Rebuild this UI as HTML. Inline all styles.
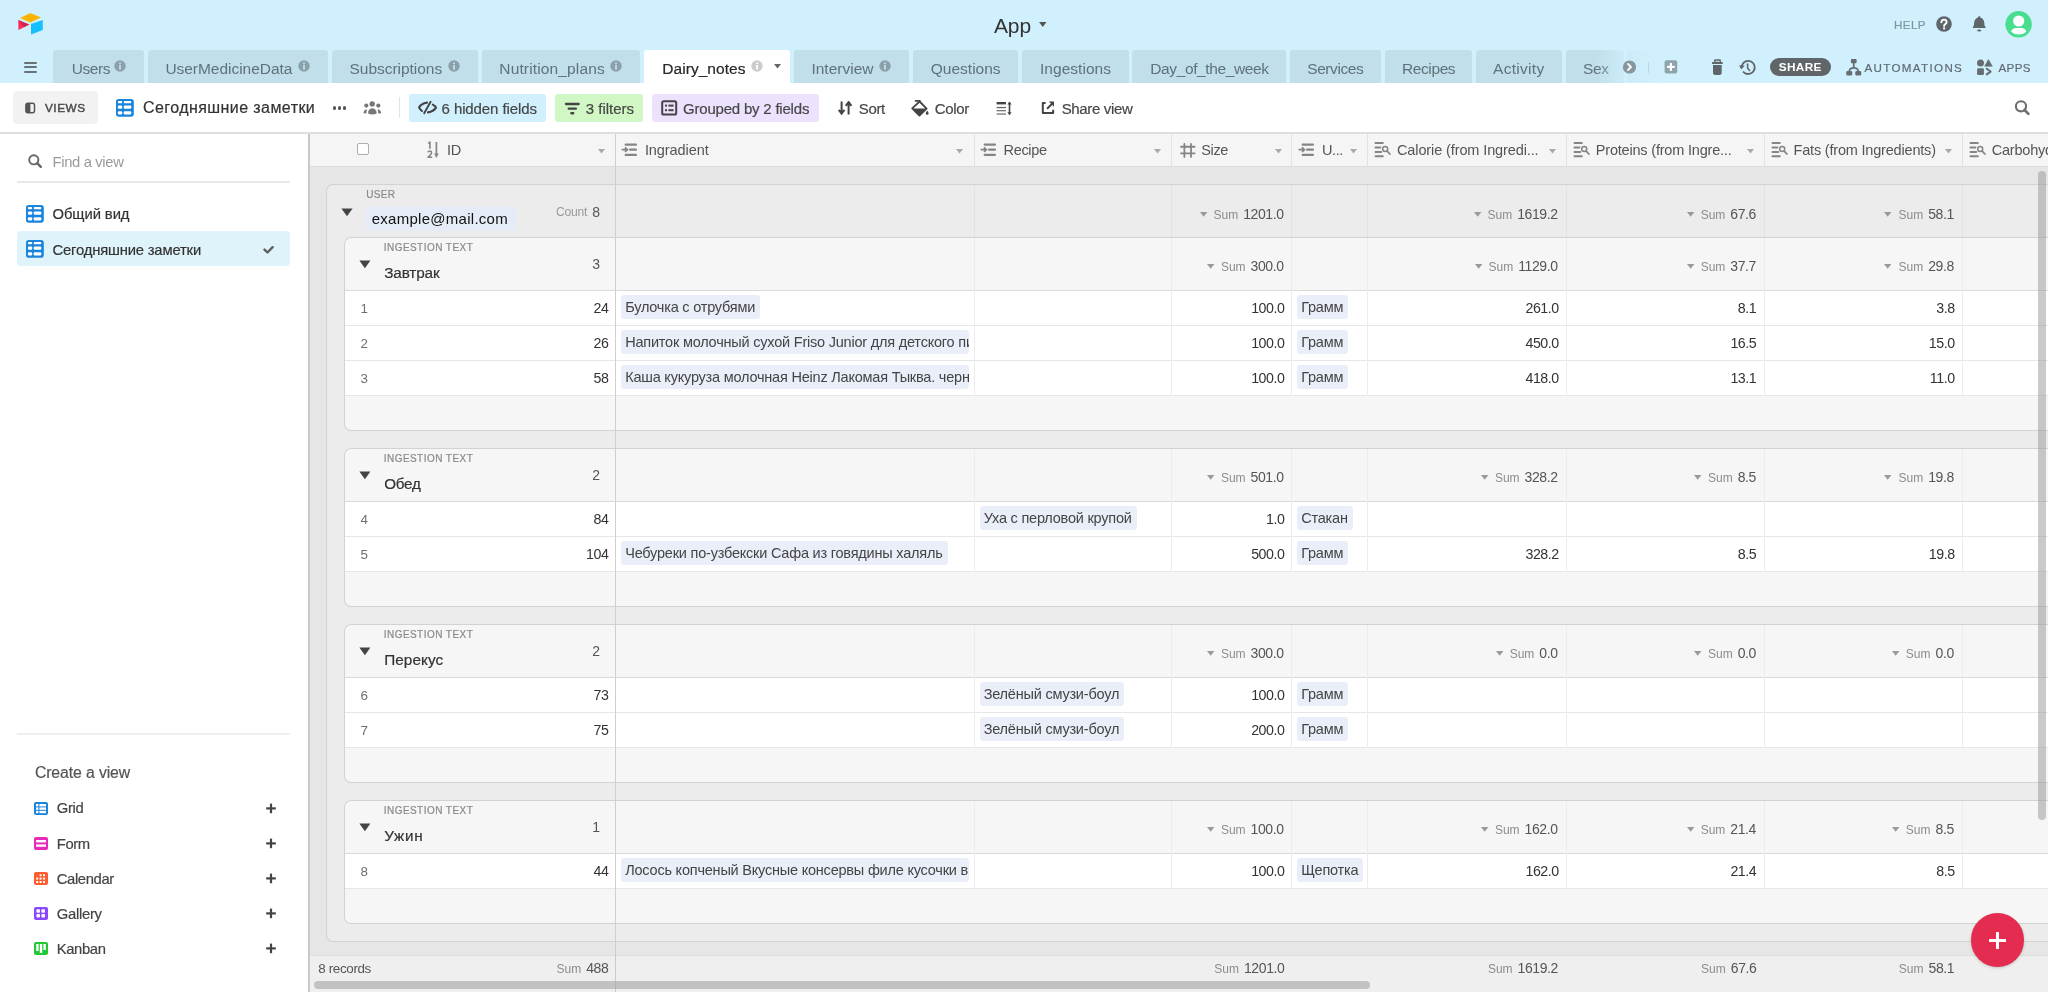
<!DOCTYPE html>
<html><head><meta charset="utf-8"><title>Airtable</title>
<style>
html,body{margin:0;padding:0;}
body{width:2048px;height:992px;overflow:hidden;position:relative;background:#fff;font-family:"Liberation Sans",sans-serif;}
.a{position:absolute;}
.t{position:absolute;white-space:nowrap;line-height:1;}
.med{-webkit-text-stroke:0.2px currentColor;}
.med2{-webkit-text-stroke:0.45px currentColor;}
.agg{line-height:1;}
.pill{height:24px;line-height:24px;padding:0 5px 0 4.2px;background:#e9eef9;border-radius:3px;font-size:14.5px;letter-spacing:-0.21px;color:#444;white-space:nowrap;overflow:hidden;box-sizing:border-box;}
</style></head><body>
<div id="root" style="position:absolute;left:0;top:0;width:2048px;height:992px;overflow:hidden;will-change:transform">
<div class="a" style="left:0px;top:0px;width:2048px;height:83px;background:#d0f0fd;"></div>
<svg class="a" style="left:16px;top:11px;" width="30" height="26" viewBox="0 0 30 26"><polygon points="14.3,2 25,6.6 14.3,11.6 4,7" fill="#fcb400"/><polygon points="2.2,9 13.3,13.5 2.5,19" fill="#f82b60"/><polygon points="2.2,9 13.3,13.5 8,16.2" fill="#ba1e45" opacity="0.6"/><polygon points="15,13 26.8,8.9 26.8,19 15,23.6" fill="#18bfff"/></svg>
<div class="t " style="left:993.90px;top:15.02px;font-size:21px;color:#333;letter-spacing:-0.040px;">App</div>
<svg class="a" style="left:1039px;top:22px;" width="8" height="5" viewBox="0 0 8 5"><polygon points="0,0 7.5,0 3.75,5" fill="#555"/></svg>
<div class="t med" style="left:1894.00px;top:18.98px;font-size:11.6px;color:#7f959e;letter-spacing:0.400px;">HELP</div>
<svg class="a" style="left:1935px;top:15px;" width="18" height="18" viewBox="0 0 18 18"><circle cx="9" cy="9" r="7.8" fill="#5f6569"/><path d="M6.4,7.2 Q6.4,4.6 9,4.6 Q11.6,4.6 11.6,7 Q11.6,8.4 10,9.3 Q9.1,9.9 9.1,11" stroke="#fff" stroke-width="1.9" fill="none" stroke-linecap="round"/><circle cx="9.1" cy="13.4" r="1.1" fill="#fff"/></svg>
<svg class="a" style="left:1971px;top:15px;" width="17" height="18" viewBox="0 0 17 18"><path d="M8.2,1 Q9.2,1.2 9.4,2.4 Q12.9,3.4 13.3,8 L13.5,10.4 Q14.6,11.4 14.7,13 L1.7,13 Q1.8,11.4 2.9,10.4 L3.1,8 Q3.5,3.4 7,2.4 Q7.2,1.2 8.2,1 Z" fill="#5f6569"/><ellipse cx="8.2" cy="15.6" rx="2.1" ry="1" fill="#5f6569"/></svg>
<svg class="a" style="left:2005px;top:11px;" width="28" height="28" viewBox="0 0 28 28"><circle cx="13.6" cy="13.3" r="13.2" fill="#48dd8f"/><circle cx="13.7" cy="10" r="5.6" fill="#fff"/><path d="M6,20.8 Q7,17 11,17 L16.4,17 Q20.4,17 21.4,20.8 Q18.5,23.5 13.7,23.5 Q9,23.5 6,20.8 Z" fill="#fff"/></svg>
<div class="a" style="left:24px;top:61.8px;width:13px;height:2.2px;background:#687277;border-radius:1.1px;"></div>
<div class="a" style="left:24px;top:66.2px;width:13px;height:2.2px;background:#687277;border-radius:1.1px;"></div>
<div class="a" style="left:24px;top:70.5px;width:13px;height:2.2px;background:#687277;border-radius:1.1px;"></div>
<div class="a" style="left:53px;top:50px;width:91px;height:33px;background:#c0dfeb;border-radius:3px 3px 0 0;"></div>
<div class="t " style="left:71.70px;top:60.68px;font-size:15.5px;color:#5f7279;letter-spacing:-0.400px;">Users</div>
<svg class="a" style="left:113.7px;top:60px;" width="12" height="12" viewBox="0 0 12 12"><circle cx="6" cy="6" r="5.7" fill="#8aa1aa"/><rect x="5.1" y="5" width="1.8" height="4.6" fill="#c0dfeb"/><rect x="5.1" y="2.5" width="1.8" height="1.6" fill="#c0dfeb"/></svg>
<div class="a" style="left:147.6px;top:50px;width:180.4px;height:33px;background:#c0dfeb;border-radius:3px 3px 0 0;"></div>
<div class="t " style="left:165.40px;top:60.68px;font-size:15.5px;color:#5f7279;letter-spacing:-0.035px;">UserMedicineData</div>
<svg class="a" style="left:297.9px;top:60px;" width="12" height="12" viewBox="0 0 12 12"><circle cx="6" cy="6" r="5.7" fill="#8aa1aa"/><rect x="5.1" y="5" width="1.8" height="4.6" fill="#c0dfeb"/><rect x="5.1" y="2.5" width="1.8" height="1.6" fill="#c0dfeb"/></svg>
<div class="a" style="left:331.7px;top:50px;width:146.0px;height:33px;background:#c0dfeb;border-radius:3px 3px 0 0;"></div>
<div class="t " style="left:349.50px;top:60.68px;font-size:15.5px;color:#5f7279;letter-spacing:-0.028px;">Subscriptions</div>
<svg class="a" style="left:447.7px;top:60px;" width="12" height="12" viewBox="0 0 12 12"><circle cx="6" cy="6" r="5.7" fill="#8aa1aa"/><rect x="5.1" y="5" width="1.8" height="4.6" fill="#c0dfeb"/><rect x="5.1" y="2.5" width="1.8" height="1.6" fill="#c0dfeb"/></svg>
<div class="a" style="left:481.5px;top:50px;width:158.79999999999995px;height:33px;background:#c0dfeb;border-radius:3px 3px 0 0;"></div>
<div class="t " style="left:499.30px;top:60.68px;font-size:15.5px;color:#5f7279;letter-spacing:0.144px;">Nutrition_plans</div>
<svg class="a" style="left:610.2px;top:60px;" width="12" height="12" viewBox="0 0 12 12"><circle cx="6" cy="6" r="5.7" fill="#8aa1aa"/><rect x="5.1" y="5" width="1.8" height="4.6" fill="#c0dfeb"/><rect x="5.1" y="2.5" width="1.8" height="1.6" fill="#c0dfeb"/></svg>
<div class="a" style="left:793.6px;top:50px;width:115.60000000000002px;height:33px;background:#c0dfeb;border-radius:3px 3px 0 0;"></div>
<div class="t " style="left:811.40px;top:60.68px;font-size:15.5px;color:#5f7279;letter-spacing:0.015px;">Interview</div>
<svg class="a" style="left:879.2px;top:60px;" width="12" height="12" viewBox="0 0 12 12"><circle cx="6" cy="6" r="5.7" fill="#8aa1aa"/><rect x="5.1" y="5" width="1.8" height="4.6" fill="#c0dfeb"/><rect x="5.1" y="2.5" width="1.8" height="1.6" fill="#c0dfeb"/></svg>
<div class="a" style="left:913px;top:50px;width:105.39999999999998px;height:33px;background:#c0dfeb;border-radius:3px 3px 0 0;"></div>
<div class="t " style="left:930.80px;top:60.68px;font-size:15.5px;color:#5f7279;letter-spacing:0.001px;">Questions</div>
<div class="a" style="left:1022px;top:50px;width:106.79999999999995px;height:33px;background:#c0dfeb;border-radius:3px 3px 0 0;"></div>
<div class="t " style="left:1040.00px;top:60.68px;font-size:15.5px;color:#5f7279;letter-spacing:0.036px;">Ingestions</div>
<div class="a" style="left:1132px;top:50px;width:154px;height:33px;background:#c0dfeb;border-radius:3px 3px 0 0;"></div>
<div class="t " style="left:1150.30px;top:60.68px;font-size:15.5px;color:#5f7279;letter-spacing:-0.387px;">Day_of_the_week</div>
<div class="a" style="left:1290px;top:50px;width:91px;height:33px;background:#c0dfeb;border-radius:3px 3px 0 0;"></div>
<div class="t " style="left:1307.20px;top:60.68px;font-size:15.5px;color:#5f7279;letter-spacing:-0.400px;">Services</div>
<div class="a" style="left:1385px;top:50px;width:87px;height:33px;background:#c0dfeb;border-radius:3px 3px 0 0;"></div>
<div class="t " style="left:1402.00px;top:60.68px;font-size:15.5px;color:#5f7279;letter-spacing:-0.400px;">Recipes</div>
<div class="a" style="left:1476px;top:50px;width:85.59999999999991px;height:33px;background:#c0dfeb;border-radius:3px 3px 0 0;"></div>
<div class="t " style="left:1493.00px;top:60.68px;font-size:15.5px;color:#5f7279;letter-spacing:0.300px;">Activity</div>
<div class="a" style="left:1565.5px;top:50px;width:58.5px;height:33px;background:#c0dfeb;border-radius:3px 3px 0 0;"></div>
<div class="t " style="left:1583.00px;top:60.68px;font-size:15.5px;color:#5f7279;letter-spacing:-0.400px;">Sex</div>
<div class="a" style="left:1627px;top:50px;width:30px;height:33px;background:#c0dfeb;border-radius:3px 3px 0 0;"></div>
<div class="a" style="left:1596px;top:50px;width:64px;height:33px;background:linear-gradient(to right, rgba(208,240,253,0) 0%, rgba(208,240,253,0.75) 45%, #d0f0fd 100%);"></div>
<div class="a" style="left:1648px;top:62px;width:1px;height:11px;background:rgba(95,114,121,0.18);"></div>
<div class="a" style="left:643.8px;top:50px;width:146px;height:34px;background:#fff;border-radius:3px 3px 0 0;"></div>
<div class="t med" style="left:662.30px;top:60.88px;font-size:15.5px;color:#262626;letter-spacing:0.040px;">Dairy_notes</div>
<svg class="a" style="left:750.8px;top:60px;" width="12" height="12" viewBox="0 0 12 12"><circle cx="6" cy="6" r="5.7" fill="#ccc"/><rect x="5.1" y="5" width="1.8" height="4.6" fill="#fff"/><rect x="5.1" y="2.5" width="1.8" height="1.6" fill="#fff"/></svg>
<svg class="a" style="left:773.5px;top:64px;" width="8" height="5" viewBox="0 0 8 5"><polygon points="0,0 7,0 3.5,4.5" fill="#666"/></svg>
<svg class="a" style="left:1622px;top:60px;" width="15" height="15" viewBox="0 0 15 15"><circle cx="7.5" cy="7" r="6.6" fill="#86979e"/><path d="M6,4 L9,7 L6,10" stroke="#fff" stroke-width="1.8" fill="none" stroke-linecap="round" stroke-linejoin="round"/></svg>
<svg class="a" style="left:1664px;top:60px;" width="14" height="14" viewBox="0 0 14 14"><rect x="0.6" y="0.2" width="12.6" height="13.2" rx="2" fill="#8fa3ab"/><rect x="5.8" y="3" width="2.2" height="7.8" fill="#fff"/><rect x="3" y="5.8" width="7.8" height="2.2" fill="#fff"/></svg>
<svg class="a" style="left:1711px;top:58px;" width="13" height="18" viewBox="0 0 13 18"><rect x="3.7" y="2" width="5.6" height="2.4" stroke="#5f6569" stroke-width="1.3" fill="none" rx="0.4"/><rect x="1" y="3.9" width="10.7" height="2" rx="0.5" fill="#5f6569"/><path d="M2,7.1 L10.7,7.1 L10.7,14.4 Q10.7,16.9 8.2,16.9 L4.5,16.9 Q2,16.9 2,14.4 Z" fill="#5f6569"/></svg>
<svg class="a" style="left:1737px;top:58px;" width="20" height="18" viewBox="0 0 20 18"><path d="M6.56,14.06 A6.55,6.55 0 1 0 4.9,7.6" stroke="#5f6569" stroke-width="1.8" fill="none" stroke-linecap="round"/><polygon points="1.9,7.4 7.7,7.6 4.5,11.4" fill="#5f6569"/><path d="M10.6,6 L10.6,10.3 L12.6,12.5" stroke="#5f6569" stroke-width="1.6" fill="none" stroke-linecap="round" stroke-linejoin="round"/></svg>
<div class="a" style="left:1770.4px;top:58.4px;width:60.6px;height:17.6px;background:#5f6569;border-radius:9px;"></div>
<div class="t " style="left:1778.80px;top:62.01px;font-size:11.8px;color:#fff;font-weight:bold;letter-spacing:0.325px;">SHARE</div>
<svg class="a" style="left:1845px;top:58px;" width="18" height="19" viewBox="0 0 18 19"><rect x="5.9" y="1.1" width="5.7" height="4.1" rx="1" fill="#656d71"/><path d="M8.75,5 L8.75,9.8 M4.3,13.6 Q4.3,9.9 8.75,9.9 Q13.2,9.9 13.2,13.6" stroke="#656d71" stroke-width="1.7" fill="none"/><rect x="1.3" y="13" width="5.9" height="4.5" rx="1.2" fill="#656d71"/><rect x="10.3" y="13" width="5.9" height="4.5" rx="1.2" fill="#656d71"/></svg>
<div class="t med" style="left:1864.40px;top:61.98px;font-size:11.6px;color:#626b70;letter-spacing:1.349px;">AUTOMATIONS</div>
<svg class="a" style="left:1976px;top:59px;" width="18" height="17" viewBox="0 0 18 17"><circle cx="4.5" cy="4" r="3.5" fill="#656d71"/><polygon points="12.4,0.6 16.3,7.2 8.7,7.2" fill="#656d71" stroke="#656d71" stroke-width="0.6" stroke-linejoin="round"/><rect x="1.1" y="9.2" width="6.8" height="6.8" rx="1.2" fill="#656d71"/><path d="M10.8,9.8 L14.6,12.6 L10.8,15.4" stroke="#656d71" stroke-width="2" fill="none" stroke-linecap="round" stroke-linejoin="round"/></svg>
<div class="t med" style="left:1998.40px;top:61.98px;font-size:11.6px;color:#626b70;letter-spacing:0.400px;">APPS</div>
<div class="a" style="left:0px;top:83px;width:2048px;height:50px;background:#fff;"></div>
<div class="a" style="left:0px;top:132px;width:2048px;height:2px;background:#dfdfdf;"></div>
<div class="a" style="left:13px;top:91px;width:85px;height:33px;background:#f2f2f2;border-radius:4px;"></div>
<svg class="a" style="left:24px;top:102px;" width="12" height="12" viewBox="0 0 12 12"><rect x="1.9" y="1.2" width="8.6" height="9.6" rx="2" fill="none" stroke="#555" stroke-width="1.5"/><path d="M3.4,1.2 L6.4,1.2 L6.4,10.8 L3.4,10.8 Q1.9,10.8 1.9,9.3 L1.9,2.7 Q1.9,1.2 3.4,1.2 Z" fill="#555"/></svg>
<div class="t med2" style="left:44.90px;top:102.81px;font-size:11.8px;color:#4a4a4a;letter-spacing:0.569px;">VIEWS</div>
<svg class="a" style="left:116px;top:99px;" width="18" height="18" viewBox="0 0 18 18"><rect x="0" y="0" width="17.80" height="17.80" rx="2.80" fill="#1a83dc"/><rect x="1.90" y="2.10" width="4.30" height="2.10" rx="1.00" fill="#fff"/><rect x="7.70" y="2.10" width="7.60" height="2.10" rx="1.00" fill="#fff"/><rect x="1.90" y="6.50" width="4.30" height="3.30" rx="1.00" fill="#fff"/><rect x="7.70" y="6.50" width="7.60" height="3.30" rx="1.00" fill="#fff"/><rect x="1.90" y="12.20" width="4.30" height="3.20" rx="1.00" fill="#fff"/><rect x="7.70" y="12.20" width="7.60" height="3.20" rx="1.00" fill="#fff"/></svg>
<div class="t med" style="left:143.00px;top:100.26px;font-size:16px;color:#333;letter-spacing:0.424px;">Сегодняшние заметки</div>
<div class="a" style="left:332.9px;top:106.4px;width:3.2px;height:3.2px;border-radius:50%;background:#555"></div>
<div class="a" style="left:337.9px;top:106.4px;width:3.2px;height:3.2px;border-radius:50%;background:#555"></div>
<div class="a" style="left:342.9px;top:106.4px;width:3.2px;height:3.2px;border-radius:50%;background:#555"></div>
<svg class="a" style="left:362px;top:100px;" width="21" height="16" viewBox="0 0 21 16"><circle cx="10.2" cy="3.9" r="2.7" fill="#777"/><circle cx="4.3" cy="5.6" r="2.1" fill="#777"/><circle cx="16.3" cy="5.6" r="2.1" fill="#777"/><path d="M6.1,13.6 Q6,8.4 10.3,8.2 Q14.6,8.4 14.6,13.6 Q10.4,15.6 6.1,13.6 Z" fill="#777"/><path d="M1.4,13.2 Q1.6,10.2 3.8,9.4 L5.2,9.6 Q4.3,11.4 4.4,13.4 Z" fill="#777"/><path d="M19.2,13.2 Q19,10.2 16.8,9.4 L15.4,9.6 Q16.3,11.4 16.2,13.4 Z" fill="#777"/></svg>
<div class="a" style="left:399px;top:97px;width:1px;height:21px;background:#e3e3e3;"></div>
<div class="a" style="left:409.4px;top:93.9px;width:136.5px;height:27.7px;background:#d0f0fd;border-radius:3px;"></div>
<svg class="a" style="left:416px;top:99px;" width="22" height="16" viewBox="0 0 22 16"><path d="M11,3.6 Q5,4.6 3,8.4 Q4,10.6 6,12" stroke="#444" stroke-width="2.1" fill="none" stroke-linecap="round"/><path d="M16.8,5.6 Q19.6,7 20,8.6 Q17.5,12.6 12,13.4" stroke="#444" stroke-width="2.1" fill="none" stroke-linecap="round"/><path d="M14.6,2.8 L8.2,14.2" stroke="#444" stroke-width="1.9" stroke-linecap="round"/></svg>
<div class="t med" style="left:441.60px;top:100.90px;font-size:15px;color:#474747;letter-spacing:-0.104px;">6 hidden fields</div>
<div class="a" style="left:555px;top:93.9px;width:88px;height:27.7px;background:#d1f7c4;border-radius:3px;"></div>
<svg class="a" style="left:564px;top:101.2px;" width="17" height="15" viewBox="0 0 17 15"><rect x="0.8" y="1.8" width="15" height="2.4" rx="1.1" fill="#444"/><rect x="3.6" y="6.4" width="9.4" height="2.4" rx="1.1" fill="#444"/><rect x="6.2" y="11" width="4.2" height="2.4" rx="1.1" fill="#444"/></svg>
<div class="t med" style="left:585.80px;top:100.90px;font-size:15px;color:#474747;letter-spacing:-0.005px;">3 filters</div>
<div class="a" style="left:651.9px;top:93.9px;width:167px;height:27.7px;background:#ede2fe;border-radius:3px;"></div>
<svg class="a" style="left:661px;top:100px;" width="17" height="16" viewBox="0 0 17 16"><rect x="1.2" y="1.2" width="14" height="13.4" rx="1.6" fill="none" stroke="#444" stroke-width="2"/><rect x="4" y="4.6" width="2" height="2" fill="#444"/><rect x="7.4" y="4.6" width="5.2" height="2" fill="#444"/><rect x="4" y="9.2" width="2" height="2" fill="#444"/><rect x="7.4" y="9.2" width="5.2" height="2" fill="#444"/></svg>
<div class="t med" style="left:683.00px;top:100.90px;font-size:15px;color:#474747;letter-spacing:-0.205px;">Grouped by 2 fields</div>
<svg class="a" style="left:838px;top:101px;" width="15" height="14" viewBox="0 0 15 14"><path d="M3.6,0.6 L3.6,12 M0.8,8.8 L3.6,12.6 L6.4,8.8" stroke="#444" stroke-width="2" fill="none"/><path d="M10.6,13.4 L10.6,1.6 M7.8,4.8 L10.6,1 L13.4,4.8" stroke="#444" stroke-width="2" fill="none"/></svg>
<div class="t med" style="left:858.70px;top:100.90px;font-size:15px;color:#474747;letter-spacing:-0.308px;">Sort</div>
<svg class="a" style="left:910px;top:99px;" width="20" height="18" viewBox="0 0 20 18"><path d="M2.2,9.4 L9.6,2.5 L16.6,9.6 L9.4,16.6 Z" fill="none" stroke="#444" stroke-width="1.8" stroke-linejoin="round"/><path d="M2.2,9.4 L16.6,9.6 L9.4,16.6 Z" fill="#444"/><path d="M5.6,1.9 L9.8,1.9" stroke="#444" stroke-width="1.8" stroke-linecap="round"/><path d="M17.2,11.6 Q18.6,13.6 18.6,14.4 Q18.6,15.8 17.2,15.8 Q15.8,15.8 15.8,14.4 Q15.8,13.6 17.2,11.6 Z" fill="#444"/></svg>
<div class="t med" style="left:934.70px;top:100.90px;font-size:15px;color:#474747;letter-spacing:-0.350px;">Color</div>
<svg class="a" style="left:995px;top:100px;" width="18" height="17" viewBox="0 0 18 17"><rect x="1.6" y="2" width="9.4" height="2.4" fill="#444"/><rect x="1.6" y="6.9" width="9.4" height="1.3" fill="#666"/><rect x="1.6" y="10" width="9.4" height="1.3" fill="#777"/><rect x="1.6" y="13.4" width="9.4" height="1.3" fill="#777"/><path d="M14.5,2.6 L14.5,13.8" stroke="#444" stroke-width="1.6"/><polygon points="12.4,4.4 14.5,1.4 16.6,4.4" fill="#444"/><polygon points="12.4,12.2 14.5,15.2 16.6,12.2" fill="#444"/></svg>
<svg class="a" style="left:1040px;top:100px;" width="16" height="16" viewBox="0 0 16 16"><path d="M5.6,2.9 L2.8,2.9 L2.8,13.1 L13.2,13.1 L13.2,9.8" stroke="#444" stroke-width="2" fill="none" stroke-linejoin="round"/><path d="M7.6,8.2 L12.2,3.6" stroke="#444" stroke-width="2" stroke-linecap="round"/><polygon points="8.8,1.6 14,1.6 14,6.8" fill="#444"/></svg>
<div class="t med" style="left:1061.70px;top:100.90px;font-size:15px;color:#474747;letter-spacing:-0.350px;">Share view</div>
<svg class="a" style="left:2012px;top:97px;" width="20" height="20" viewBox="0 0 20 20"><circle cx="9" cy="9.3" r="5.1" stroke="#6d6d6d" stroke-width="2.1" fill="none"/><path d="M12.6,13 L16.4,16.8" stroke="#6d6d6d" stroke-width="2.6" stroke-linecap="round"/></svg>
<div class="a" style="left:0px;top:134px;width:308px;height:858px;background:#fff;"></div>
<div class="a" style="left:307.6px;top:134px;width:2.3px;height:858px;background:#c9c9c9;"></div>
<svg class="a" style="left:27px;top:153px;" width="17" height="17" viewBox="0 0 17 17"><circle cx="6.8" cy="6.8" r="4.6" stroke="#666" stroke-width="1.9" fill="none"/><path d="M10.2,10.2 L13.8,13.8" stroke="#666" stroke-width="2.4" stroke-linecap="round"/></svg>
<div class="t " style="left:52.50px;top:154.87px;font-size:14.8px;color:#9a9a9a;letter-spacing:-0.350px;">Find a view</div>
<div class="a" style="left:16.6px;top:180.5px;width:273.4px;height:2px;background:#e8e8e8;"></div>
<svg class="a" style="left:25.8px;top:204.9px;" width="18" height="18" viewBox="0 0 18 18"><rect x="0" y="0" width="17.80" height="17.80" rx="2.80" fill="#1a83dc"/><rect x="1.90" y="2.10" width="4.30" height="2.10" rx="1.00" fill="#fff"/><rect x="7.70" y="2.10" width="7.60" height="2.10" rx="1.00" fill="#fff"/><rect x="1.90" y="6.50" width="4.30" height="3.30" rx="1.00" fill="#fff"/><rect x="7.70" y="6.50" width="7.60" height="3.30" rx="1.00" fill="#fff"/><rect x="1.90" y="12.20" width="4.30" height="3.20" rx="1.00" fill="#fff"/><rect x="7.70" y="12.20" width="7.60" height="3.20" rx="1.00" fill="#fff"/></svg>
<div class="t med" style="left:52.50px;top:207.27px;font-size:14.8px;color:#333;letter-spacing:-0.074px;">Общий вид</div>
<div class="a" style="left:17px;top:231.3px;width:273px;height:34.7px;background:#dff3fb;border-radius:4px;"></div>
<svg class="a" style="left:25.8px;top:239.9px;" width="18" height="18" viewBox="0 0 18 18"><rect x="0" y="0" width="17.80" height="17.80" rx="2.80" fill="#1a83dc"/><rect x="1.90" y="2.10" width="4.30" height="2.10" rx="1.00" fill="#fff"/><rect x="7.70" y="2.10" width="7.60" height="2.10" rx="1.00" fill="#fff"/><rect x="1.90" y="6.50" width="4.30" height="3.30" rx="1.00" fill="#fff"/><rect x="7.70" y="6.50" width="7.60" height="3.30" rx="1.00" fill="#fff"/><rect x="1.90" y="12.20" width="4.30" height="3.20" rx="1.00" fill="#fff"/><rect x="7.70" y="12.20" width="7.60" height="3.20" rx="1.00" fill="#fff"/></svg>
<div class="t med" style="left:52.50px;top:242.67px;font-size:14.8px;color:#333;letter-spacing:-0.175px;">Сегодняшние заметки</div>
<svg class="a" style="left:263px;top:244px;" width="13" height="11" viewBox="0 0 13 11"><path d="M1.5,5.6 L4.5,8.5 L9.6,3.2" stroke="#5e5e5e" stroke-width="2.4" fill="none" stroke-linecap="round" stroke-linejoin="round"/></svg>
<div class="a" style="left:16.8px;top:733.4px;width:273.2px;height:2px;background:#efefef;"></div>
<div class="t med" style="left:34.90px;top:764.83px;font-size:15.8px;color:#555;letter-spacing:-0.105px;">Create a view</div>
<svg class="a" style="left:34.2px;top:801.7px;" width="14" height="13" viewBox="0 0 14 13"><rect width="14" height="13" rx="2" fill="#1a83dc"/><rect x="2" y="2.0" width="2.4" height="2.4" fill="#fff"/><rect x="5.4" y="2.0" width="6.6" height="2.4" fill="#fff"/><rect x="2" y="5.4" width="2.4" height="2.4" fill="#fff"/><rect x="5.4" y="5.4" width="6.6" height="2.4" fill="#fff"/><rect x="2" y="8.8" width="2.4" height="2.4" fill="#fff"/><rect x="5.4" y="8.8" width="6.6" height="2.4" fill="#fff"/></svg>
<div class="t med" style="left:56.70px;top:801.47px;font-size:14.8px;color:#444;letter-spacing:-0.291px;">Grid</div>
<svg class="a" style="left:264.5px;top:802.7px;" width="12" height="11" viewBox="0 0 12 11"><rect x="4.9" y="0.6" width="2.2" height="9.6" fill="#444"/><rect x="1.2" y="4.3" width="9.6" height="2.2" fill="#444"/></svg>
<svg class="a" style="left:34.2px;top:836.8000000000001px;" width="14" height="13" viewBox="0 0 14 13"><rect width="14" height="13" rx="2" fill="#e929ba"/><rect x="2" y="3" width="10" height="2.4" fill="#fff"/><rect x="2" y="7.4" width="10" height="2.4" fill="#fff"/></svg>
<div class="t med" style="left:56.70px;top:836.57px;font-size:14.8px;color:#444;letter-spacing:-0.350px;">Form</div>
<svg class="a" style="left:264.5px;top:837.8000000000001px;" width="12" height="11" viewBox="0 0 12 11"><rect x="4.9" y="0.6" width="2.2" height="9.6" fill="#444"/><rect x="1.2" y="4.3" width="9.6" height="2.2" fill="#444"/></svg>
<svg class="a" style="left:34.2px;top:871.9000000000001px;" width="14" height="13" viewBox="0 0 14 13"><rect width="14" height="13" rx="2" fill="#fc5b2e"/><rect x="5.6" y="2.2" width="2" height="2" fill="#fff"/><rect x="9.0" y="2.2" width="2" height="2" fill="#fff"/><rect x="2.2" y="5.6" width="2" height="2" fill="#fff"/><rect x="5.6" y="5.6" width="2" height="2" fill="#fff"/><rect x="9.0" y="5.6" width="2" height="2" fill="#fff"/><rect x="2.2" y="9.0" width="2" height="2" fill="#fff"/><rect x="5.6" y="9.0" width="2" height="2" fill="#fff"/><rect x="9.0" y="9.0" width="2" height="2" fill="#fff"/></svg>
<div class="t med" style="left:56.70px;top:871.67px;font-size:14.8px;color:#444;letter-spacing:-0.350px;">Calendar</div>
<svg class="a" style="left:264.5px;top:872.9000000000001px;" width="12" height="11" viewBox="0 0 12 11"><rect x="4.9" y="0.6" width="2.2" height="9.6" fill="#444"/><rect x="1.2" y="4.3" width="9.6" height="2.2" fill="#444"/></svg>
<svg class="a" style="left:34.2px;top:907.0px;" width="14" height="13" viewBox="0 0 14 13"><rect width="14" height="13" rx="2" fill="#8b46ff"/><rect x="2.4" y="2.2" width="3.6" height="3.6" rx="1" fill="#fff"/><rect x="7.4" y="2.2" width="3.6" height="3.6" rx="1" fill="#fff"/><rect x="2.4" y="7.0" width="3.6" height="3.6" rx="1" fill="#fff"/><rect x="7.4" y="7.0" width="3.6" height="3.6" rx="1" fill="#fff"/></svg>
<div class="t med" style="left:56.70px;top:906.77px;font-size:14.8px;color:#444;letter-spacing:-0.263px;">Gallery</div>
<svg class="a" style="left:264.5px;top:908.0px;" width="12" height="11" viewBox="0 0 12 11"><rect x="4.9" y="0.6" width="2.2" height="9.6" fill="#444"/><rect x="1.2" y="4.3" width="9.6" height="2.2" fill="#444"/></svg>
<svg class="a" style="left:34.2px;top:942.1px;" width="14" height="13" viewBox="0 0 14 13"><rect width="14" height="13" rx="2" fill="#20c933"/><rect x="2.2" y="2" width="2.4" height="7" fill="#fff"/><rect x="5.8" y="2" width="2.4" height="9" fill="#fff"/><rect x="9.4" y="2" width="2.4" height="6" fill="#fff"/></svg>
<div class="t med" style="left:56.70px;top:941.87px;font-size:14.8px;color:#444;letter-spacing:-0.350px;">Kanban</div>
<svg class="a" style="left:264.5px;top:943.1px;" width="12" height="11" viewBox="0 0 12 11"><rect x="4.9" y="0.6" width="2.2" height="9.6" fill="#444"/><rect x="1.2" y="4.3" width="9.6" height="2.2" fill="#444"/></svg>
<div class="a" style="left:310.4px;top:134px;width:1737.6px;height:858px;background:#e6e6e6;"></div>
<div class="a" style="left:310.4px;top:134px;width:1737.6px;height:32px;background:#f5f5f5;"></div>
<div class="a" style="left:310.4px;top:166px;width:1737.6px;height:1px;background:#dcdcdc;"></div>
<div class="a" style="left:357px;top:143px;width:10px;height:10px;border:1.2px solid #a9b0b4;border-radius:2px;background:#fff"></div>
<svg class="a" style="left:426px;top:141px;" width="14" height="18" viewBox="0 0 14 18"><path d="M2.2,2.4 L3.9,1.1 L3.9,7.7" stroke="#858585" stroke-width="1.6" fill="none" stroke-linejoin="round"/><path d="M2,11.2 Q2.4,10 3.9,10 Q5.6,10 5.6,11.7 Q5.6,12.8 4,14.2 L2,16.2 L6.2,16.2" stroke="#858585" stroke-width="1.5" fill="none" stroke-linejoin="round"/><path d="M10.4,1 L10.4,13.6" stroke="#858585" stroke-width="1.7"/><polygon points="8.1,12.6 12.7,12.6 10.4,16.9" fill="#858585"/></svg>
<div class="t " style="left:447.10px;top:142.93px;font-size:14.5px;color:#555;letter-spacing:-0.350px;">ID</div>
<svg class="a" style="left:597.5px;top:148.5px;" width="8" height="5" viewBox="0 0 8 5"><polygon points="0,0 7,0 3.5,4.6" fill="#aaa"/></svg>
<svg class="a" style="left:620.6px;top:142.6px;" width="17" height="14" viewBox="0 0 17 14"><rect x="3.6" y="0.6" width="12.4" height="2.1" rx="1" fill="#858585"/><rect x="8" y="5.6" width="8" height="2.1" rx="1" fill="#858585"/><rect x="3.6" y="10.8" width="12.4" height="2.1" rx="1" fill="#858585"/><path d="M0.6,6.65 L6.2,6.65 M4,4.4 L6.4,6.65 L4,8.9" stroke="#858585" stroke-width="1.8" fill="none"/></svg>
<div class="t " style="left:644.90px;top:142.93px;font-size:14.5px;color:#555;letter-spacing:-0.077px;">Ingradient</div>
<svg class="a" style="left:956px;top:148.5px;" width="8" height="5" viewBox="0 0 8 5"><polygon points="0,0 7,0 3.5,4.6" fill="#aaa"/></svg>
<svg class="a" style="left:979.6px;top:142.6px;" width="17" height="14" viewBox="0 0 17 14"><rect x="3.6" y="0.6" width="12.4" height="2.1" rx="1" fill="#858585"/><rect x="8" y="5.6" width="8" height="2.1" rx="1" fill="#858585"/><rect x="3.6" y="10.8" width="12.4" height="2.1" rx="1" fill="#858585"/><path d="M0.6,6.65 L6.2,6.65 M4,4.4 L6.4,6.65 L4,8.9" stroke="#858585" stroke-width="1.8" fill="none"/></svg>
<div class="t " style="left:1003.60px;top:142.93px;font-size:14.5px;color:#555;letter-spacing:-0.350px;">Recipe</div>
<svg class="a" style="left:1154.4px;top:148.5px;" width="8" height="5" viewBox="0 0 8 5"><polygon points="0,0 7,0 3.5,4.6" fill="#aaa"/></svg>
<svg class="a" style="left:1179.6px;top:142.6px;" width="16" height="15" viewBox="0 0 16 15"><path d="M4.4,0.9 L4.4,13.9 M11,0.9 L11,13.9 M1,3.75 L14.6,3.75 M1,10.3 L14.6,10.3" stroke="#858585" stroke-width="1.8" stroke-linecap="round" fill="none"/></svg>
<div class="t " style="left:1201.20px;top:142.93px;font-size:14.5px;color:#555;letter-spacing:-0.350px;">Size</div>
<svg class="a" style="left:1275px;top:148.5px;" width="8" height="5" viewBox="0 0 8 5"><polygon points="0,0 7,0 3.5,4.6" fill="#aaa"/></svg>
<svg class="a" style="left:1298.4px;top:142.6px;" width="17" height="14" viewBox="0 0 17 14"><rect x="3.6" y="0.6" width="12.4" height="2.1" rx="1" fill="#858585"/><rect x="8" y="5.6" width="8" height="2.1" rx="1" fill="#858585"/><rect x="3.6" y="10.8" width="12.4" height="2.1" rx="1" fill="#858585"/><path d="M0.6,6.65 L6.2,6.65 M4,4.4 L6.4,6.65 L4,8.9" stroke="#858585" stroke-width="1.8" fill="none"/></svg>
<div class="t " style="left:1321.90px;top:142.93px;font-size:14.5px;color:#555;letter-spacing:-0.350px;">U...</div>
<svg class="a" style="left:1350.4px;top:148.5px;" width="8" height="5" viewBox="0 0 8 5"><polygon points="0,0 7,0 3.5,4.6" fill="#aaa"/></svg>
<svg class="a" style="left:1374.2px;top:142px;" width="18" height="16" viewBox="0 0 18 16"><path d="M1.5,1 L8.8,1 M1.5,5.5 L6.4,5.5 M1.5,9.9 L7.2,9.9 M1.5,14.3 L8.8,14.3" stroke="#858585" stroke-width="2" stroke-linecap="round"/><circle cx="11.2" cy="7.1" r="2.5" stroke="#858585" stroke-width="1.5" fill="none"/><path d="M13.2,9.2 L15.9,12" stroke="#858585" stroke-width="1.8" stroke-linecap="round"/></svg>
<div class="t " style="left:1397.00px;top:142.93px;font-size:14.5px;color:#555;letter-spacing:-0.115px;">Calorie (from Ingredi...</div>
<svg class="a" style="left:1549.2px;top:148.5px;" width="8" height="5" viewBox="0 0 8 5"><polygon points="0,0 7,0 3.5,4.6" fill="#aaa"/></svg>
<svg class="a" style="left:1572.6px;top:142px;" width="18" height="16" viewBox="0 0 18 16"><path d="M1.5,1 L8.8,1 M1.5,5.5 L6.4,5.5 M1.5,9.9 L7.2,9.9 M1.5,14.3 L8.8,14.3" stroke="#858585" stroke-width="2" stroke-linecap="round"/><circle cx="11.2" cy="7.1" r="2.5" stroke="#858585" stroke-width="1.5" fill="none"/><path d="M13.2,9.2 L15.9,12" stroke="#858585" stroke-width="1.8" stroke-linecap="round"/></svg>
<div class="t " style="left:1595.80px;top:142.93px;font-size:14.5px;color:#555;letter-spacing:-0.196px;">Proteins (from Ingre...</div>
<svg class="a" style="left:1747px;top:148.5px;" width="8" height="5" viewBox="0 0 8 5"><polygon points="0,0 7,0 3.5,4.6" fill="#aaa"/></svg>
<svg class="a" style="left:1770.6px;top:142px;" width="18" height="16" viewBox="0 0 18 16"><path d="M1.5,1 L8.8,1 M1.5,5.5 L6.4,5.5 M1.5,9.9 L7.2,9.9 M1.5,14.3 L8.8,14.3" stroke="#858585" stroke-width="2" stroke-linecap="round"/><circle cx="11.2" cy="7.1" r="2.5" stroke="#858585" stroke-width="1.5" fill="none"/><path d="M13.2,9.2 L15.9,12" stroke="#858585" stroke-width="1.8" stroke-linecap="round"/></svg>
<div class="t " style="left:1793.50px;top:142.93px;font-size:14.5px;color:#555;letter-spacing:-0.189px;">Fats (from Ingredients)</div>
<svg class="a" style="left:1945px;top:148.5px;" width="8" height="5" viewBox="0 0 8 5"><polygon points="0,0 7,0 3.5,4.6" fill="#aaa"/></svg>
<svg class="a" style="left:1969px;top:142px;" width="18" height="16" viewBox="0 0 18 16"><path d="M1.5,1 L8.8,1 M1.5,5.5 L6.4,5.5 M1.5,9.9 L7.2,9.9 M1.5,14.3 L8.8,14.3" stroke="#858585" stroke-width="2" stroke-linecap="round"/><circle cx="11.2" cy="7.1" r="2.5" stroke="#858585" stroke-width="1.5" fill="none"/><path d="M13.2,9.2 L15.9,12" stroke="#858585" stroke-width="1.8" stroke-linecap="round"/></svg>
<div class="t " style="left:1991.70px;top:142.93px;font-size:14.5px;color:#555;letter-spacing:-0.200px;">Carbohydrates (from Ingredients)</div>
<div class="a" style="left:615.0px;top:134px;width:1px;height:32px;background:#cfcfcf;"></div>
<div class="a" style="left:973.5px;top:134px;width:1px;height:32px;background:#e3e3e3;"></div>
<div class="a" style="left:1170.5px;top:134px;width:1px;height:32px;background:#e3e3e3;"></div>
<div class="a" style="left:1291.0px;top:134px;width:1px;height:32px;background:#e3e3e3;"></div>
<div class="a" style="left:1366.5px;top:134px;width:1px;height:32px;background:#e3e3e3;"></div>
<div class="a" style="left:1565.5px;top:134px;width:1px;height:32px;background:#e3e3e3;"></div>
<div class="a" style="left:1763.5px;top:134px;width:1px;height:32px;background:#e3e3e3;"></div>
<div class="a" style="left:1961.5px;top:134px;width:1px;height:32px;background:#e3e3e3;"></div>
<div class="a" style="left:326px;top:184px;width:1722px;height:758.2px;background:#ececec;border:1.4px solid #d2d2d2;border-right:none;border-radius:7px 0 0 7px;box-sizing:border-box;"></div>
<div class="a" style="left:615.5px;top:184px;width:1432.5px;height:758.2px;background:transparent;border-top:1px solid #d2d2d2;border-bottom:1px solid #d2d2d2;box-sizing:border-box;"></div>
<div class="a" style="left:310.4px;top:236.5px;width:1737.6px;height:0px;background:transparent;"></div>
<div class="t med" style="left:366.30px;top:190.13px;font-size:10px;color:#8a8a8a;letter-spacing:0.300px;">USER</div>
<svg class="a" style="left:340.6px;top:208.4px;" width="12" height="9" viewBox="0 0 12 9"><polygon points="0.4,0.4 11.6,0.4 6,8.2" fill="#444"/></svg>
<div class="a" style="left:366px;top:207.2px;width:150.3px;height:23.4px;background:#e6ecf7;border-radius:3px;"></div>
<div class="t " style="left:371.70px;top:211.20px;font-size:15px;color:#111;letter-spacing:0.272px;">example@mail.com</div>
<div class="t " style="left:556.00px;top:206.35px;font-size:12.11px;color:#999;letter-spacing:-0.250px;">Count</div>
<div class="t " style="left:592.23px;top:205.05px;font-size:14px;color:#555;">8</div>
<div class="t agg" style="right:764.40px;top:206.55px;font-size:14px;"><svg width="8" height="5" viewBox="0 0 8 5" style="margin-right:6px;vertical-align:2px"><polygon points="0,0 7.4,0 3.7,4.8" fill="#999"/></svg><span style="font-size:12px;color:#8c8c8c;margin-right:5px">Sum</span><span style="color:#555;letter-spacing:-0.4px">1201.0</span></div>
<div class="t agg" style="right:490.40px;top:206.55px;font-size:14px;"><svg width="8" height="5" viewBox="0 0 8 5" style="margin-right:6px;vertical-align:2px"><polygon points="0,0 7.4,0 3.7,4.8" fill="#999"/></svg><span style="font-size:12px;color:#8c8c8c;margin-right:5px">Sum</span><span style="color:#555;letter-spacing:-0.4px">1619.2</span></div>
<div class="t agg" style="right:292.00px;top:206.55px;font-size:14px;"><svg width="8" height="5" viewBox="0 0 8 5" style="margin-right:6px;vertical-align:2px"><polygon points="0,0 7.4,0 3.7,4.8" fill="#999"/></svg><span style="font-size:12px;color:#8c8c8c;margin-right:5px">Sum</span><span style="color:#555;letter-spacing:-0.4px">67.6</span></div>
<div class="t agg" style="right:94.20px;top:206.55px;font-size:14px;"><svg width="8" height="5" viewBox="0 0 8 5" style="margin-right:6px;vertical-align:2px"><polygon points="0,0 7.4,0 3.7,4.8" fill="#999"/></svg><span style="font-size:12px;color:#8c8c8c;margin-right:5px">Sum</span><span style="color:#555;letter-spacing:-0.4px">58.1</span></div>
<div class="a" style="left:973.5px;top:185px;width:1px;height:52px;background:#e2e2e2;"></div>
<div class="a" style="left:1170.5px;top:185px;width:1px;height:52px;background:#e2e2e2;"></div>
<div class="a" style="left:1291.0px;top:185px;width:1px;height:52px;background:#e2e2e2;"></div>
<div class="a" style="left:1366.5px;top:185px;width:1px;height:52px;background:#e2e2e2;"></div>
<div class="a" style="left:1565.5px;top:185px;width:1px;height:52px;background:#e2e2e2;"></div>
<div class="a" style="left:1763.5px;top:185px;width:1px;height:52px;background:#e2e2e2;"></div>
<div class="a" style="left:1961.5px;top:185px;width:1px;height:52px;background:#e2e2e2;"></div>
<div class="a" style="left:615px;top:184px;width:1px;height:53px;background:#cfcfcf;"></div>
<div class="a" style="left:343.9px;top:237px;width:271.6px;height:193.5px;background:#f6f6f6;border:1.2px solid #d2d2d2;border-right:none;border-radius:7px 0 0 7px;box-sizing:border-box;"></div>
<div class="a" style="left:615.5px;top:237px;width:1432.5px;height:193.5px;background:#f6f6f6;border-top:1px solid #d2d2d2;border-bottom:1px solid #d2d2d2;box-sizing:border-box;"></div>
<div class="a" style="left:345.1px;top:290px;width:1702.9px;height:1px;background:#dadada;"></div>
<div class="t med" style="left:383.75px;top:242.78px;font-size:10px;color:#8a8a8a;letter-spacing:0.450px;">INGESTION TEXT</div>
<svg class="a" style="left:358.6px;top:260.2px;" width="12" height="9" viewBox="0 0 12 9"><polygon points="0.4,0.4 11.4,0.4 5.9,8.2" fill="#444"/></svg>
<div class="t med" style="left:384.20px;top:264.85px;font-size:15.3px;color:#333;letter-spacing:-0.140px;">Завтрак</div>
<div class="t " style="left:592.23px;top:257.05px;font-size:14px;color:#555;">3</div>
<div class="t agg" style="right:764.40px;top:258.75px;font-size:14px;"><svg width="8" height="5" viewBox="0 0 8 5" style="margin-right:6px;vertical-align:2px"><polygon points="0,0 7.4,0 3.7,4.8" fill="#999"/></svg><span style="font-size:12px;color:#8c8c8c;margin-right:5px">Sum</span><span style="color:#555;letter-spacing:-0.4px">300.0</span></div>
<div class="t agg" style="right:490.40px;top:258.75px;font-size:14px;"><svg width="8" height="5" viewBox="0 0 8 5" style="margin-right:6px;vertical-align:2px"><polygon points="0,0 7.4,0 3.7,4.8" fill="#999"/></svg><span style="font-size:12px;color:#8c8c8c;margin-right:5px">Sum</span><span style="color:#555;letter-spacing:-0.4px">1129.0</span></div>
<div class="t agg" style="right:292.00px;top:258.75px;font-size:14px;"><svg width="8" height="5" viewBox="0 0 8 5" style="margin-right:6px;vertical-align:2px"><polygon points="0,0 7.4,0 3.7,4.8" fill="#999"/></svg><span style="font-size:12px;color:#8c8c8c;margin-right:5px">Sum</span><span style="color:#555;letter-spacing:-0.4px">37.7</span></div>
<div class="t agg" style="right:94.20px;top:258.75px;font-size:14px;"><svg width="8" height="5" viewBox="0 0 8 5" style="margin-right:6px;vertical-align:2px"><polygon points="0,0 7.4,0 3.7,4.8" fill="#999"/></svg><span style="font-size:12px;color:#8c8c8c;margin-right:5px">Sum</span><span style="color:#555;letter-spacing:-0.4px">29.8</span></div>
<div class="a" style="left:345.1px;top:291px;width:1702.9px;height:34px;background:#fff;"></div>
<div class="a" style="left:345.1px;top:325px;width:1702.9px;height:1px;background:#e3e7e8;"></div>
<div class="t " style="left:360.40px;top:301.66px;font-size:13.4px;color:#6f6f6f;">1</div>
<div class="t " style="left:593.45px;top:300.98px;font-size:14.2px;color:#333;letter-spacing:-0.450px;">24</div>
<div class="a pill" style="left:621px;top:294.8px;max-width:348px;">Булочка с отрубями</div>
<div class="t " style="left:1251.16px;top:300.98px;font-size:14.2px;color:#333;letter-spacing:-0.450px;">100.0</div>
<div class="a pill" style="left:1297px;top:294.8px;">Грамм</div>
<div class="t " style="left:1525.46px;top:300.98px;font-size:14.2px;color:#333;letter-spacing:-0.450px;">261.0</div>
<div class="t " style="left:1737.86px;top:300.98px;font-size:14.2px;color:#333;letter-spacing:-0.450px;">8.1</div>
<div class="t " style="left:1936.26px;top:300.98px;font-size:14.2px;color:#333;letter-spacing:-0.450px;">3.8</div>
<div class="a" style="left:345.1px;top:326px;width:1702.9px;height:34px;background:#fff;"></div>
<div class="a" style="left:345.1px;top:360px;width:1702.9px;height:1px;background:#e3e7e8;"></div>
<div class="t " style="left:360.40px;top:336.66px;font-size:13.4px;color:#6f6f6f;">2</div>
<div class="t " style="left:593.45px;top:335.98px;font-size:14.2px;color:#333;letter-spacing:-0.450px;">26</div>
<div class="a pill" style="left:621px;top:329.8px;max-width:348px;">Напиток молочный сухой Friso Junior для детского питания</div>
<div class="t " style="left:1251.16px;top:335.98px;font-size:14.2px;color:#333;letter-spacing:-0.450px;">100.0</div>
<div class="a pill" style="left:1297px;top:329.8px;">Грамм</div>
<div class="t " style="left:1525.46px;top:335.98px;font-size:14.2px;color:#333;letter-spacing:-0.450px;">450.0</div>
<div class="t " style="left:1730.40px;top:335.98px;font-size:14.2px;color:#333;letter-spacing:-0.450px;">16.5</div>
<div class="t " style="left:1928.80px;top:335.98px;font-size:14.2px;color:#333;letter-spacing:-0.450px;">15.0</div>
<div class="a" style="left:345.1px;top:361px;width:1702.9px;height:34px;background:#fff;"></div>
<div class="a" style="left:345.1px;top:395px;width:1702.9px;height:1px;background:#e3e7e8;"></div>
<div class="t " style="left:360.40px;top:371.66px;font-size:13.4px;color:#6f6f6f;">3</div>
<div class="t " style="left:593.45px;top:370.98px;font-size:14.2px;color:#333;letter-spacing:-0.450px;">58</div>
<div class="a pill" style="left:621px;top:364.8px;max-width:348px;">Каша кукуруза молочная Heinz Лакомая Тыква. черника</div>
<div class="t " style="left:1251.16px;top:370.98px;font-size:14.2px;color:#333;letter-spacing:-0.450px;">100.0</div>
<div class="a pill" style="left:1297px;top:364.8px;">Грамм</div>
<div class="t " style="left:1525.46px;top:370.98px;font-size:14.2px;color:#333;letter-spacing:-0.450px;">418.0</div>
<div class="t " style="left:1730.40px;top:370.98px;font-size:14.2px;color:#333;letter-spacing:-0.450px;">13.1</div>
<div class="t " style="left:1929.86px;top:370.98px;font-size:14.2px;color:#333;letter-spacing:-0.450px;">11.0</div>
<div class="a" style="left:973.5px;top:238px;width:1px;height:158px;background:#ececec;"></div>
<div class="a" style="left:1170.5px;top:238px;width:1px;height:158px;background:#ececec;"></div>
<div class="a" style="left:1291.0px;top:238px;width:1px;height:158px;background:#ececec;"></div>
<div class="a" style="left:1366.5px;top:238px;width:1px;height:158px;background:#ececec;"></div>
<div class="a" style="left:1565.5px;top:238px;width:1px;height:158px;background:#ececec;"></div>
<div class="a" style="left:1763.5px;top:238px;width:1px;height:158px;background:#ececec;"></div>
<div class="a" style="left:1961.5px;top:238px;width:1px;height:158px;background:#ececec;"></div>
<div class="a" style="left:615px;top:237px;width:1px;height:193px;background:#cfcfcf;"></div>
<div class="a" style="left:343.9px;top:448px;width:271.6px;height:158.5px;background:#f6f6f6;border:1.2px solid #d2d2d2;border-right:none;border-radius:7px 0 0 7px;box-sizing:border-box;"></div>
<div class="a" style="left:615.5px;top:448px;width:1432.5px;height:158.5px;background:#f6f6f6;border-top:1px solid #d2d2d2;border-bottom:1px solid #d2d2d2;box-sizing:border-box;"></div>
<div class="a" style="left:345.1px;top:501px;width:1702.9px;height:1px;background:#dadada;"></div>
<div class="t med" style="left:383.75px;top:453.79px;font-size:10px;color:#8a8a8a;letter-spacing:0.450px;">INGESTION TEXT</div>
<svg class="a" style="left:358.6px;top:471.2px;" width="12" height="9" viewBox="0 0 12 9"><polygon points="0.4,0.4 11.4,0.4 5.9,8.2" fill="#444"/></svg>
<div class="t med" style="left:384.20px;top:475.93px;font-size:15.2px;color:#333;letter-spacing:-0.250px;">Обед</div>
<div class="t " style="left:592.23px;top:468.05px;font-size:14px;color:#555;">2</div>
<div class="t agg" style="right:764.40px;top:469.75px;font-size:14px;"><svg width="8" height="5" viewBox="0 0 8 5" style="margin-right:6px;vertical-align:2px"><polygon points="0,0 7.4,0 3.7,4.8" fill="#999"/></svg><span style="font-size:12px;color:#8c8c8c;margin-right:5px">Sum</span><span style="color:#555;letter-spacing:-0.4px">501.0</span></div>
<div class="t agg" style="right:490.40px;top:469.75px;font-size:14px;"><svg width="8" height="5" viewBox="0 0 8 5" style="margin-right:6px;vertical-align:2px"><polygon points="0,0 7.4,0 3.7,4.8" fill="#999"/></svg><span style="font-size:12px;color:#8c8c8c;margin-right:5px">Sum</span><span style="color:#555;letter-spacing:-0.4px">328.2</span></div>
<div class="t agg" style="right:292.00px;top:469.75px;font-size:14px;"><svg width="8" height="5" viewBox="0 0 8 5" style="margin-right:6px;vertical-align:2px"><polygon points="0,0 7.4,0 3.7,4.8" fill="#999"/></svg><span style="font-size:12px;color:#8c8c8c;margin-right:5px">Sum</span><span style="color:#555;letter-spacing:-0.4px">8.5</span></div>
<div class="t agg" style="right:94.20px;top:469.75px;font-size:14px;"><svg width="8" height="5" viewBox="0 0 8 5" style="margin-right:6px;vertical-align:2px"><polygon points="0,0 7.4,0 3.7,4.8" fill="#999"/></svg><span style="font-size:12px;color:#8c8c8c;margin-right:5px">Sum</span><span style="color:#555;letter-spacing:-0.4px">19.8</span></div>
<div class="a" style="left:345.1px;top:502px;width:1702.9px;height:34px;background:#fff;"></div>
<div class="a" style="left:345.1px;top:536px;width:1702.9px;height:1px;background:#e3e7e8;"></div>
<div class="t " style="left:360.40px;top:512.66px;font-size:13.4px;color:#6f6f6f;">4</div>
<div class="t " style="left:593.45px;top:511.98px;font-size:14.2px;color:#333;letter-spacing:-0.450px;">84</div>
<div class="a pill" style="left:979.5px;top:505.8px;max-width:186px;">Уха с перловой крупой</div>
<div class="t " style="left:1266.06px;top:511.98px;font-size:14.2px;color:#333;letter-spacing:-0.450px;">1.0</div>
<div class="a pill" style="left:1297px;top:505.8px;">Стакан</div>
<div class="a" style="left:345.1px;top:537px;width:1702.9px;height:34px;background:#fff;"></div>
<div class="a" style="left:345.1px;top:571px;width:1702.9px;height:1px;background:#e3e7e8;"></div>
<div class="t " style="left:360.40px;top:547.66px;font-size:13.4px;color:#6f6f6f;">5</div>
<div class="t " style="left:586.02px;top:546.98px;font-size:14.2px;color:#333;letter-spacing:-0.450px;">104</div>
<div class="a pill" style="left:621px;top:540.8px;max-width:348px;">Чебуреки по-узбекски Сафа из говядины халяль</div>
<div class="t " style="left:1251.16px;top:546.98px;font-size:14.2px;color:#333;letter-spacing:-0.450px;">500.0</div>
<div class="a pill" style="left:1297px;top:540.8px;">Грамм</div>
<div class="t " style="left:1525.46px;top:546.98px;font-size:14.2px;color:#333;letter-spacing:-0.450px;">328.2</div>
<div class="t " style="left:1737.86px;top:546.98px;font-size:14.2px;color:#333;letter-spacing:-0.450px;">8.5</div>
<div class="t " style="left:1928.80px;top:546.98px;font-size:14.2px;color:#333;letter-spacing:-0.450px;">19.8</div>
<div class="a" style="left:973.5px;top:449px;width:1px;height:123px;background:#ececec;"></div>
<div class="a" style="left:1170.5px;top:449px;width:1px;height:123px;background:#ececec;"></div>
<div class="a" style="left:1291.0px;top:449px;width:1px;height:123px;background:#ececec;"></div>
<div class="a" style="left:1366.5px;top:449px;width:1px;height:123px;background:#ececec;"></div>
<div class="a" style="left:1565.5px;top:449px;width:1px;height:123px;background:#ececec;"></div>
<div class="a" style="left:1763.5px;top:449px;width:1px;height:123px;background:#ececec;"></div>
<div class="a" style="left:1961.5px;top:449px;width:1px;height:123px;background:#ececec;"></div>
<div class="a" style="left:615px;top:448px;width:1px;height:158px;background:#cfcfcf;"></div>
<div class="a" style="left:343.9px;top:624px;width:271.6px;height:158.5px;background:#f6f6f6;border:1.2px solid #d2d2d2;border-right:none;border-radius:7px 0 0 7px;box-sizing:border-box;"></div>
<div class="a" style="left:615.5px;top:624px;width:1432.5px;height:158.5px;background:#f6f6f6;border-top:1px solid #d2d2d2;border-bottom:1px solid #d2d2d2;box-sizing:border-box;"></div>
<div class="a" style="left:345.1px;top:677px;width:1702.9px;height:1px;background:#dadada;"></div>
<div class="t med" style="left:383.75px;top:629.78px;font-size:10px;color:#8a8a8a;letter-spacing:0.450px;">INGESTION TEXT</div>
<svg class="a" style="left:358.6px;top:647.2px;" width="12" height="9" viewBox="0 0 12 9"><polygon points="0.4,0.4 11.4,0.4 5.9,8.2" fill="#444"/></svg>
<div class="t med" style="left:384.20px;top:651.85px;font-size:15.3px;color:#333;letter-spacing:0.080px;">Перекус</div>
<div class="t " style="left:592.23px;top:644.05px;font-size:14px;color:#555;">2</div>
<div class="t agg" style="right:764.40px;top:645.75px;font-size:14px;"><svg width="8" height="5" viewBox="0 0 8 5" style="margin-right:6px;vertical-align:2px"><polygon points="0,0 7.4,0 3.7,4.8" fill="#999"/></svg><span style="font-size:12px;color:#8c8c8c;margin-right:5px">Sum</span><span style="color:#555;letter-spacing:-0.4px">300.0</span></div>
<div class="t agg" style="right:490.40px;top:645.75px;font-size:14px;"><svg width="8" height="5" viewBox="0 0 8 5" style="margin-right:6px;vertical-align:2px"><polygon points="0,0 7.4,0 3.7,4.8" fill="#999"/></svg><span style="font-size:12px;color:#8c8c8c;margin-right:5px">Sum</span><span style="color:#555;letter-spacing:-0.4px">0.0</span></div>
<div class="t agg" style="right:292.00px;top:645.75px;font-size:14px;"><svg width="8" height="5" viewBox="0 0 8 5" style="margin-right:6px;vertical-align:2px"><polygon points="0,0 7.4,0 3.7,4.8" fill="#999"/></svg><span style="font-size:12px;color:#8c8c8c;margin-right:5px">Sum</span><span style="color:#555;letter-spacing:-0.4px">0.0</span></div>
<div class="t agg" style="right:94.20px;top:645.75px;font-size:14px;"><svg width="8" height="5" viewBox="0 0 8 5" style="margin-right:6px;vertical-align:2px"><polygon points="0,0 7.4,0 3.7,4.8" fill="#999"/></svg><span style="font-size:12px;color:#8c8c8c;margin-right:5px">Sum</span><span style="color:#555;letter-spacing:-0.4px">0.0</span></div>
<div class="a" style="left:345.1px;top:678px;width:1702.9px;height:34px;background:#fff;"></div>
<div class="a" style="left:345.1px;top:712px;width:1702.9px;height:1px;background:#e3e7e8;"></div>
<div class="t " style="left:360.40px;top:688.66px;font-size:13.4px;color:#6f6f6f;">6</div>
<div class="t " style="left:593.45px;top:687.98px;font-size:14.2px;color:#333;letter-spacing:-0.450px;">73</div>
<div class="a pill" style="left:979.5px;top:681.8px;max-width:186px;">Зелёный смузи-боул</div>
<div class="t " style="left:1251.16px;top:687.98px;font-size:14.2px;color:#333;letter-spacing:-0.450px;">100.0</div>
<div class="a pill" style="left:1297px;top:681.8px;">Грамм</div>
<div class="a" style="left:345.1px;top:713px;width:1702.9px;height:34px;background:#fff;"></div>
<div class="a" style="left:345.1px;top:747px;width:1702.9px;height:1px;background:#e3e7e8;"></div>
<div class="t " style="left:360.40px;top:723.66px;font-size:13.4px;color:#6f6f6f;">7</div>
<div class="t " style="left:593.45px;top:722.98px;font-size:14.2px;color:#333;letter-spacing:-0.450px;">75</div>
<div class="a pill" style="left:979.5px;top:716.8px;max-width:186px;">Зелёный смузи-боул</div>
<div class="t " style="left:1251.16px;top:722.98px;font-size:14.2px;color:#333;letter-spacing:-0.450px;">200.0</div>
<div class="a pill" style="left:1297px;top:716.8px;">Грамм</div>
<div class="a" style="left:973.5px;top:625px;width:1px;height:123px;background:#ececec;"></div>
<div class="a" style="left:1170.5px;top:625px;width:1px;height:123px;background:#ececec;"></div>
<div class="a" style="left:1291.0px;top:625px;width:1px;height:123px;background:#ececec;"></div>
<div class="a" style="left:1366.5px;top:625px;width:1px;height:123px;background:#ececec;"></div>
<div class="a" style="left:1565.5px;top:625px;width:1px;height:123px;background:#ececec;"></div>
<div class="a" style="left:1763.5px;top:625px;width:1px;height:123px;background:#ececec;"></div>
<div class="a" style="left:1961.5px;top:625px;width:1px;height:123px;background:#ececec;"></div>
<div class="a" style="left:615px;top:624px;width:1px;height:158px;background:#cfcfcf;"></div>
<div class="a" style="left:343.9px;top:800px;width:271.6px;height:123.5px;background:#f6f6f6;border:1.2px solid #d2d2d2;border-right:none;border-radius:7px 0 0 7px;box-sizing:border-box;"></div>
<div class="a" style="left:615.5px;top:800px;width:1432.5px;height:123.5px;background:#f6f6f6;border-top:1px solid #d2d2d2;border-bottom:1px solid #d2d2d2;box-sizing:border-box;"></div>
<div class="a" style="left:345.1px;top:853px;width:1702.9px;height:1px;background:#dadada;"></div>
<div class="t med" style="left:383.75px;top:805.78px;font-size:10px;color:#8a8a8a;letter-spacing:0.450px;">INGESTION TEXT</div>
<svg class="a" style="left:358.6px;top:823.2px;" width="12" height="9" viewBox="0 0 12 9"><polygon points="0.4,0.4 11.4,0.4 5.9,8.2" fill="#444"/></svg>
<div class="t med" style="left:384.20px;top:827.85px;font-size:15.3px;color:#333;letter-spacing:0.716px;">Ужин</div>
<div class="t " style="left:592.23px;top:820.05px;font-size:14px;color:#555;">1</div>
<div class="t agg" style="right:764.40px;top:821.75px;font-size:14px;"><svg width="8" height="5" viewBox="0 0 8 5" style="margin-right:6px;vertical-align:2px"><polygon points="0,0 7.4,0 3.7,4.8" fill="#999"/></svg><span style="font-size:12px;color:#8c8c8c;margin-right:5px">Sum</span><span style="color:#555;letter-spacing:-0.4px">100.0</span></div>
<div class="t agg" style="right:490.40px;top:821.75px;font-size:14px;"><svg width="8" height="5" viewBox="0 0 8 5" style="margin-right:6px;vertical-align:2px"><polygon points="0,0 7.4,0 3.7,4.8" fill="#999"/></svg><span style="font-size:12px;color:#8c8c8c;margin-right:5px">Sum</span><span style="color:#555;letter-spacing:-0.4px">162.0</span></div>
<div class="t agg" style="right:292.00px;top:821.75px;font-size:14px;"><svg width="8" height="5" viewBox="0 0 8 5" style="margin-right:6px;vertical-align:2px"><polygon points="0,0 7.4,0 3.7,4.8" fill="#999"/></svg><span style="font-size:12px;color:#8c8c8c;margin-right:5px">Sum</span><span style="color:#555;letter-spacing:-0.4px">21.4</span></div>
<div class="t agg" style="right:94.20px;top:821.75px;font-size:14px;"><svg width="8" height="5" viewBox="0 0 8 5" style="margin-right:6px;vertical-align:2px"><polygon points="0,0 7.4,0 3.7,4.8" fill="#999"/></svg><span style="font-size:12px;color:#8c8c8c;margin-right:5px">Sum</span><span style="color:#555;letter-spacing:-0.4px">8.5</span></div>
<div class="a" style="left:345.1px;top:854px;width:1702.9px;height:34px;background:#fff;"></div>
<div class="a" style="left:345.1px;top:888px;width:1702.9px;height:1px;background:#e3e7e8;"></div>
<div class="t " style="left:360.40px;top:864.66px;font-size:13.4px;color:#6f6f6f;">8</div>
<div class="t " style="left:593.45px;top:863.98px;font-size:14.2px;color:#333;letter-spacing:-0.450px;">44</div>
<div class="a pill" style="left:621px;top:857.8px;max-width:348px;">Лосось копченый Вкусные консервы филе кусочки в масле</div>
<div class="t " style="left:1251.16px;top:863.98px;font-size:14.2px;color:#333;letter-spacing:-0.450px;">100.0</div>
<div class="a pill" style="left:1297px;top:857.8px;">Щепотка</div>
<div class="t " style="left:1525.46px;top:863.98px;font-size:14.2px;color:#333;letter-spacing:-0.450px;">162.0</div>
<div class="t " style="left:1730.40px;top:863.98px;font-size:14.2px;color:#333;letter-spacing:-0.450px;">21.4</div>
<div class="t " style="left:1936.26px;top:863.98px;font-size:14.2px;color:#333;letter-spacing:-0.450px;">8.5</div>
<div class="a" style="left:973.5px;top:801px;width:1px;height:88px;background:#ececec;"></div>
<div class="a" style="left:1170.5px;top:801px;width:1px;height:88px;background:#ececec;"></div>
<div class="a" style="left:1291.0px;top:801px;width:1px;height:88px;background:#ececec;"></div>
<div class="a" style="left:1366.5px;top:801px;width:1px;height:88px;background:#ececec;"></div>
<div class="a" style="left:1565.5px;top:801px;width:1px;height:88px;background:#ececec;"></div>
<div class="a" style="left:1763.5px;top:801px;width:1px;height:88px;background:#ececec;"></div>
<div class="a" style="left:1961.5px;top:801px;width:1px;height:88px;background:#ececec;"></div>
<div class="a" style="left:615px;top:800px;width:1px;height:123px;background:#cfcfcf;"></div>
<div class="a" style="left:615px;top:166px;width:1px;height:826px;background:#cfcfcf;"></div>
<div class="a" style="left:310.4px;top:955.5px;width:1737.6px;height:36.5px;background:#efefef;"></div>
<div class="a" style="left:310.4px;top:955px;width:1737.6px;height:1px;background:#dedede;"></div>
<div class="t " style="left:318.30px;top:961.96px;font-size:13.4px;color:#555;letter-spacing:-0.350px;">8 records</div>
<div class="t agg" style="right:1439.60px;top:961.45px;font-size:14px;"><span style="font-size:12px;color:#8c8c8c;margin-right:5px">Sum</span><span style="color:#555;letter-spacing:-0.4px">488</span></div>
<div class="t agg" style="right:763.60px;top:961.45px;font-size:14px;"><span style="font-size:12px;color:#8c8c8c;margin-right:5px">Sum</span><span style="color:#555;letter-spacing:-0.4px">1201.0</span></div>
<div class="t agg" style="right:490.00px;top:961.45px;font-size:14px;"><span style="font-size:12px;color:#8c8c8c;margin-right:5px">Sum</span><span style="color:#555;letter-spacing:-0.4px">1619.2</span></div>
<div class="t agg" style="right:291.60px;top:961.45px;font-size:14px;"><span style="font-size:12px;color:#8c8c8c;margin-right:5px">Sum</span><span style="color:#555;letter-spacing:-0.4px">67.6</span></div>
<div class="t agg" style="right:93.80px;top:961.45px;font-size:14px;"><span style="font-size:12px;color:#8c8c8c;margin-right:5px">Sum</span><span style="color:#555;letter-spacing:-0.4px">58.1</span></div>
<div class="a" style="left:2038.3px;top:171.3px;width:7.8px;height:649px;background:rgba(150,150,150,0.5);border-radius:4px;"></div>
<div class="a" style="left:314px;top:980.9px;width:1056px;height:7.8px;background:#c2c2c2;border-radius:4px;"></div>
<div class="a" style="left:615px;top:955px;width:1px;height:37px;background:rgba(160,160,160,0.45);"></div>
<div class="a" style="left:1970.6px;top:913.4px;width:53.2px;height:53.2px;border-radius:50%;background:#e42c50;box-shadow:0 1px 3px rgba(0,0,0,0.18)"></div>
<div class="a" style="left:1995.7px;top:932px;width:3.0px;height:16.8px;background:#fff;border-radius:0.5px;"></div>
<div class="a" style="left:1989px;top:939px;width:16.8px;height:3.0px;background:#fff;border-radius:0.5px;"></div>
</div>
</body></html>
